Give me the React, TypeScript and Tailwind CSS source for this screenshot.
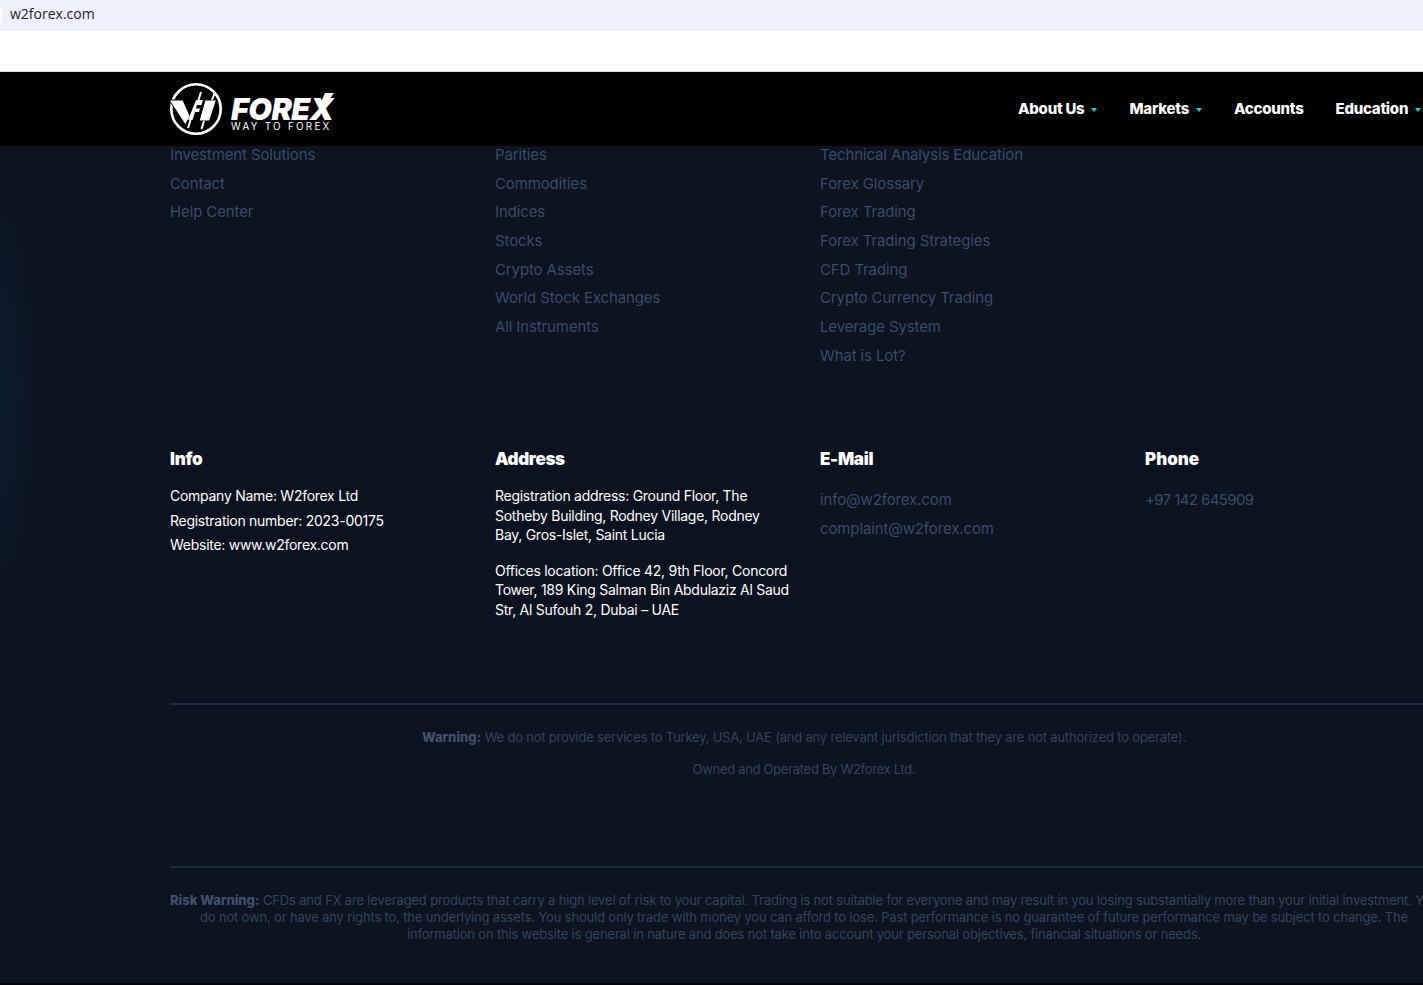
const col1 = ["Investment Solutions", "Contact", "Help Center"]
const col2 = ["Parities", "Commodities", "Indices", "Stocks", "Crypto Assets", "World Stock Exchanges", "All Instruments"]
const col3 = [
  "Technical Analysis Education",
  "Forex Glossary",
  "Forex Trading",
  "Forex Trading Strategies",
  "CFD Trading",
  "Crypto Currency Trading",
  "Leverage System",
  "What is Lot?",
]

function Logo() {
  return (
    <div className="flex items-center gap-[9px]">
      <svg width="52" height="52" viewBox="0 0 52 52" fill="none">
        <circle cx="26" cy="26" r="24.7" stroke="#fff" strokeWidth="2.6" />
        {/* V */}
        <path d="M-1 17H13L20 33L15.5 42Z" fill="#fff" stroke="#000" strokeWidth="1" />
        {/* left candle, cut like an F */}
        <path d="M26 17H33L31.5 22H27L26 25.5H30L29 29H25L22.5 37H18Z" fill="#fff" />
        <path d="M31 9L28.5 17M20.5 37L18 45" stroke="#fff" strokeWidth="2" />
        {/* right candle */}
        <path d="M35 17H46.5L39.5 38H29Z" fill="#fff" stroke="#000" strokeWidth="1" />
        <path d="M45 9L42 17M34 38L31.5 46" stroke="#fff" strokeWidth="2" />
      </svg>
      <div className="relative flex flex-col mt-[8.5px]">
        <span className="font-['Inter',sans-serif] text-[30.5px] leading-[26px] font-black italic text-white tracking-[-0.5px]">
          FOREX
        </span>
        <svg className="absolute left-[89px] top-[-3px]" width="14" height="11" viewBox="0 0 14 11" fill="#fff">
          <path d="M5 0H14L6 11H0Z" />
        </svg>
        <span className="mt-[0.5px] font-['Inter',sans-serif] text-[9.8px] leading-[9px] text-white tracking-[2.3px] whitespace-nowrap">
          WAY TO FOREX
        </span>
      </div>
    </div>
  )
}

function NavItem({ label, caret }: { label: string; caret?: boolean }) {
  return (
    <div className="flex items-center shrink-0">
      <span className="text-[15px] font-extrabold text-white whitespace-nowrap tracking-[-0.25px]">{label}</span>
      {caret && <span className="ml-[7px] w-0 h-0 border-x-[3px] border-t-[4px] border-x-transparent border-t-[#19d3da]" />}
    </div>
  )
}

function LinkColumn({ items }: { items: string[] }) {
  return (
    <ul className="w-[325px] shrink-0 flex flex-col gap-[12.7px]">
      {items.map((item) => (
        <li key={item} className="text-[15px] leading-[16px] tracking-[-0.12px] text-[#3c4d68] whitespace-nowrap">
          {item}
        </li>
      ))}
    </ul>
  )
}

export default function App() {
  return (
    <div className="w-[1423px] h-[985px] overflow-hidden bg-white font-['Inter',sans-serif] flex flex-col">
      <div className="h-[31px] bg-[#ebf0fa] flex items-center pb-[4px] font-['Open_Sans',sans-serif] text-[14px] text-[#1f1f1f] shrink-0">
        <span className="w-[2px] h-[16px] mt-[4px] bg-white rounded-r-full mr-[8px]" />
        w2forex.com
      </div>
      <div className="h-[40px] bg-white shrink-0" />
      <header className="h-[75px] bg-black border-t border-[#dcdcdc] shrink-0 flex items-center pl-[170px] justify-between overflow-hidden">
        <Logo />
        <nav className="flex items-center gap-[32px] w-[405px] shrink-0 pt-[1px]">
          <NavItem label="About Us" caret />
          <NavItem label="Markets" caret />
          <NavItem label="Accounts" />
          <NavItem label="Education" caret />
        </nav>
      </header>
      <main className="flex-1 bg-[#0b1220] bg-[radial-gradient(ellipse_45px_240px_at_0_245px,#0a1c2c,transparent)] border-b-2 border-black pl-[170px] overflow-hidden">
        <div className="w-[1268px]">
          <div className="flex h-[268px] pt-[1px]">
            <LinkColumn items={col1} />
            <LinkColumn items={col2} />
            <LinkColumn items={col3} />
          </div>
          <div className="flex h-[289px] pt-[32.5px]">
            <div className="w-[325px] shrink-0">
              <h4 className="text-[17px] font-black text-white leading-[24px] tracking-[-0.3px]">Info</h4>
              <div className="mt-[13.5px] text-[14px] text-white leading-[24.5px] tracking-[-0.27px]">
                <p>Company Name: W2forex Ltd</p>
                <p>Registration number: 2023-00175</p>
                <p>Website: www.w2forex.com</p>
              </div>
            </div>
            <div className="w-[325px] shrink-0">
              <h4 className="text-[17px] font-black text-white leading-[24px] tracking-[-0.3px]">Address</h4>
              <div className="mt-[15.5px] text-[14px] text-white leading-[19.5px] tracking-[-0.27px] w-[300px]">
                <p>
                  Registration address: Ground Floor, The Sotheby Building, Rodney Village, Rodney
                  <br />
                  Bay, Gros-Islet, Saint Lucia
                </p>
                <p className="mt-[16px]">Offices location: Office 42, 9th Floor, Concord Tower, 189 King Salman Bin Abdulaziz Al Saud Str, Al Sufouh 2, Dubai – UAE</p>
              </div>
            </div>
            <div className="w-[325px] shrink-0">
              <h4 className="text-[17px] font-black text-white leading-[24px] tracking-[-0.3px]">E-Mail</h4>
              <div className="mt-[14px] text-[15px] text-[#3c4d68] leading-[29px] tracking-[-0.12px]">
                <p>info@w2forex.com</p>
                <p>complaint@w2forex.com</p>
              </div>
            </div>
            <div className="w-[293px] shrink-0">
              <h4 className="text-[17px] font-black text-white leading-[24px]">Phone</h4>
              <div className="mt-[14px] text-[15px] text-[#3c4d68] leading-[29px] tracking-[-0.6px]">
                <p>+97 142 645909</p>
              </div>
            </div>
          </div>
          <div className="w-[1300px] border-t-2 border-[#1c2c3f]" />
          <div className="h-[161px] pt-[22px] text-center text-[13px] text-[#35455e] tracking-[-0.2px] w-[1268px]">
            <p className="leading-[20px]">
              <b className="text-[#42536e] font-extrabold tracking-normal">Warning:</b> We do not provide services to Turkey, USA, UAE (and any relevant jurisdiction that they are not authorized to operate).
            </p>
            <p className="leading-[20px] mt-[12px] tracking-[-0.3px]">Owned and Operated By W2forex Ltd.</p>
          </div>
          <div className="w-[1300px] border-t-2 border-[#1c2c3f]" />
          <p className="pt-[24px] text-center text-[13px] leading-[17px] text-[#35455e] tracking-[-0.17px] w-[1268px] whitespace-nowrap">
            <b className="text-[#42536e] font-extrabold tracking-normal">Risk Warning:</b> CFDs and FX are leveraged products that carry a high level of risk to your capital. Trading is not suitable for everyone and may result in you losing substantially more than your initial investment. You
            <br />
            do not own, or have any rights to, the underlying assets. You should only trade with money you can afford to lose. Past performance is no guarantee of future performance may be subject to change. The
            <br />
            information on this website is general in nature and does not take into account your personal objectives, financial situations or needs.
          </p>
        </div>
      </main>
    </div>
  )
}
